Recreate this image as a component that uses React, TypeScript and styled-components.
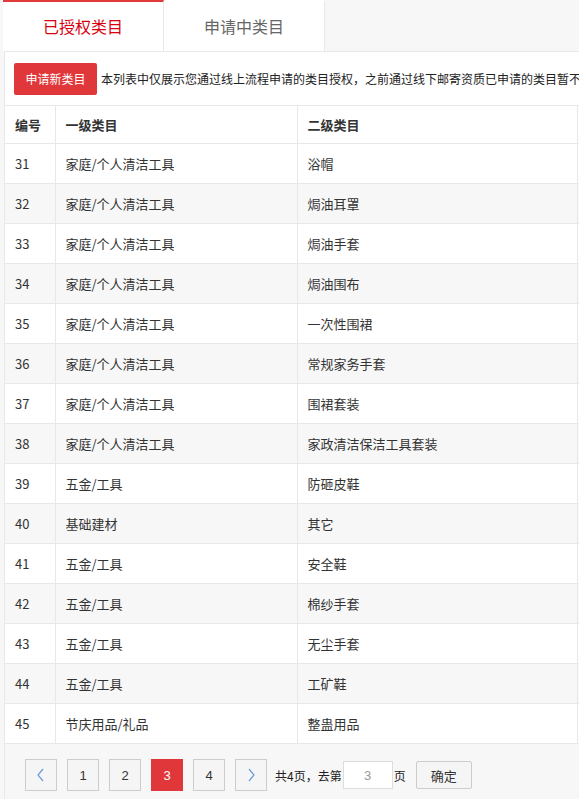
import styled, { createGlobalStyle } from "styled-components";

const GlobalStyle = createGlobalStyle`
    html, body {
        margin: 0;
        padding: 0;
        background: #f7f7f7;
        overflow: hidden;
    }
    body {
        font-family: "Noto Sans CJK SC", "Noto Sans", "Liberation Sans", sans-serif;
        color: #333;
    }
`;

const rows: [number, string, string][] = [
    [31, "家庭/个人清洁工具", "浴帽"],
    [32, "家庭/个人清洁工具", "焗油耳罩"],
    [33, "家庭/个人清洁工具", "焗油手套"],
    [34, "家庭/个人清洁工具", "焗油围布"],
    [35, "家庭/个人清洁工具", "一次性围裙"],
    [36, "家庭/个人清洁工具", "常规家务手套"],
    [37, "家庭/个人清洁工具", "围裙套装"],
    [38, "家庭/个人清洁工具", "家政清洁保洁工具套装"],
    [39, "五金/工具", "防砸皮鞋"],
    [40, "基础建材", "其它"],
    [41, "五金/工具", "安全鞋"],
    [42, "五金/工具", "棉纱手套"],
    [43, "五金/工具", "无尘手套"],
    [44, "五金/工具", "工矿鞋"],
    [45, "节庆用品/礼品", "整蛊用品"],
];

const Page = styled.div`
    width: 860px;
    padding-left: 3px;
`;

const TabBar = styled.div`
    display: flex;
    height: 51px;
`;

const Tab = styled.div<{ $active?: boolean }>`
    box-sizing: border-box;
    width: 161px;
    height: 51px;
    display: flex;
    align-items: center;
    justify-content: center;
    background: #fff;
    border-right: 1px solid #e8e8e8;
    border-top: 2px solid ${p => (p.$active ? "#e23a3a" : "#fff")};
    font-size: 16px;
    color: ${p => (p.$active ? "#d7000f" : "#666")};
    padding-bottom: 2px;
`;

const Panel = styled.div`
    margin-left: 1px;
    background: #fff;
    border: 1px solid #e8e8e8;
`;

const Toolbar = styled.div`
    display: flex;
    align-items: center;
    gap: 4px;
    height: 53px;
    padding: 0 9px;
    border-bottom: 1px solid #e8e8e8;
    white-space: nowrap;
    font-size: 12px;
    color: #222;
`;

const RedButton = styled.button`
    height: 32px;
    width: 83px;
    border: none;
    border-radius: 2px;
    background: #e0383a;
    color: #fff;
    font-family: inherit;
    font-size: 12px;
    padding: 0;
`;

const Table = styled.table`
    border-collapse: collapse;
    table-layout: fixed;
    width: 770px;
    font-size: 13px;
`;

const HeadCell = styled.th`
    height: 37px;
    padding: 0 10px;
    text-align: left;
    font-weight: bold;
    color: #333;
    border-right: 1px solid #e8e8e8;
    border-bottom: 1px solid #e8e8e8;
`;

const Row = styled.tr<{ $striped: boolean }>`
    background: ${p => (p.$striped ? "#f7f7f7" : "#fff")};
`;

const Cell = styled.td`
    height: 39px;
    padding: 0 10px;
    color: #333;
    border-right: 1px solid #e8e8e8;
    border-bottom: 1px solid #e8e8e8;
`;

const Pager = styled.div`
    display: flex;
    align-items: center;
    gap: 10px;
    background: #f7f7f7;
    padding: 15px 20px 20px;
    font-size: 12px;
`;

const PageButton = styled.div<{ $current?: boolean }>`
    box-sizing: border-box;
    width: 32px;
    height: 32px;
    display: flex;
    align-items: center;
    justify-content: center;
    background: ${p => (p.$current ? "#e0383a" : "#f5f5f5")};
    border: 1px solid ${p => (p.$current ? "#e0383a" : "#ccc")};
    color: ${p => (p.$current ? "#fff" : "#333")};
    font-family: "Liberation Sans", sans-serif;
    font-size: 13px;
`;

const JumpText = styled.span`
    display: flex;
    align-items: center;
    gap: 1px;
    margin-left: -2px;
    color: #222;
`;

const PageInput = styled.input`
    box-sizing: border-box;
    width: 50px;
    height: 28px;
    border: 1px solid #ddd;
    background: #fff;
    text-align: center;
    color: #999;
    font-family: "Liberation Sans", sans-serif;
    font-size: 13px;
    outline: none;
`;

const ConfirmButton = styled.button`
    box-sizing: border-box;
    width: 56px;
    height: 28px;
    border: 1px solid #ccc;
    border-radius: 2px;
    background: #f5f5f5;
    color: #333;
    font-family: inherit;
    font-size: 13px;
`;

function Chevron({ dir }: { dir: "left" | "right" }) {
    return (
        <svg width="10" height="14" viewBox="0 0 10 14">
            <polyline
                points={dir === "left" ? "7,1 2,7 7,13" : "3,1 8,7 3,13"}
                fill="none"
                stroke="#6a9bd8"
                strokeWidth="1.2"
            />
        </svg>
    );
}

export default function App() {
    return (
        <Page>
            <GlobalStyle />
            <TabBar>
                <Tab $active>已授权类目</Tab>
                <Tab>申请中类目</Tab>
            </TabBar>
            <Panel>
                <Toolbar>
                    <RedButton>申请新类目</RedButton>
                    <span>本列表中仅展示您通过线上流程申请的类目授权，之前通过线下邮寄资质已申请的类目暂不</span>
                </Toolbar>
                <Table>
                    <colgroup>
                        <col style={{ width: 50 }} />
                        <col style={{ width: 242 }} />
                        <col style={{ width: 280 }} />
                        <col style={{ width: 198 }} />
                    </colgroup>
                    <thead>
                        <tr>
                            <HeadCell>编号</HeadCell>
                            <HeadCell>一级类目</HeadCell>
                            <HeadCell>二级类目</HeadCell>
                            <HeadCell />
                        </tr>
                    </thead>
                    <tbody>
                        {rows.map(([id, first, second], i) => (
                            <Row key={id} $striped={i % 2 === 1}>
                                <Cell>{id}</Cell>
                                <Cell>{first}</Cell>
                                <Cell>{second}</Cell>
                                <Cell />
                            </Row>
                        ))}
                    </tbody>
                </Table>
                <Pager>
                    <PageButton><Chevron dir="left" /></PageButton>
                    <PageButton>1</PageButton>
                    <PageButton>2</PageButton>
                    <PageButton $current>3</PageButton>
                    <PageButton>4</PageButton>
                    <PageButton><Chevron dir="right" /></PageButton>
                    <JumpText>
                        共4页，去第
                        <PageInput defaultValue="3" />
                        页
                    </JumpText>
                    <ConfirmButton>确定</ConfirmButton>
                </Pager>
            </Panel>
        </Page>
    );
}
